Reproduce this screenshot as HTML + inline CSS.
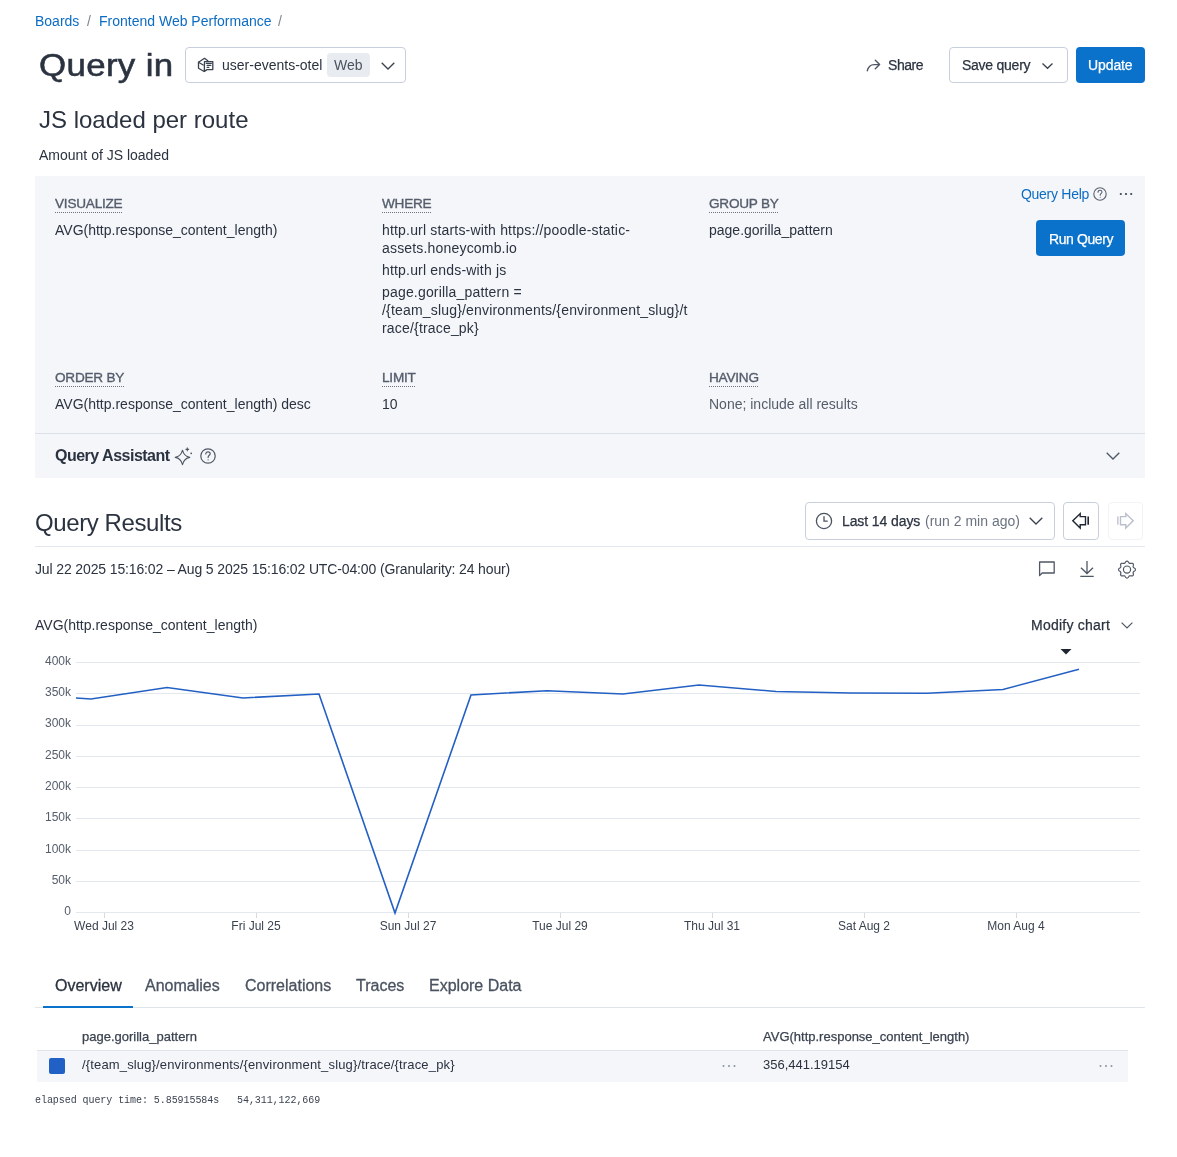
<!DOCTYPE html>
<html><head><meta charset="utf-8">
<style>
*{box-sizing:border-box;margin:0;padding:0}
html,body{width:1177px;height:1157px;overflow:hidden;background:#fff}
body{will-change:transform;font-family:"Liberation Sans",sans-serif;font-size:14px;line-height:16px;color:#2b3340;position:relative}
.a{position:absolute;white-space:nowrap}
svg{position:absolute;overflow:visible}
.blue{color:#0c6cc4}
.lbl{position:absolute;font-size:13.6px;letter-spacing:-0.23px;line-height:16px;color:#555d6b;white-space:nowrap;background-image:linear-gradient(to right,#6b7380 50%,transparent 50%);background-size:2px 1px;background-repeat:repeat-x;background-position:0 16px;padding-bottom:1px;-webkit-text-stroke:0.35px currentColor}
.val{position:absolute;line-height:18px;white-space:nowrap}
.btn{position:absolute;border:1px solid #c8cfdc;border-radius:4px;background:#fff}
.pbtn{position:absolute;border-radius:4px;background:#0b72cb}
.grid{position:absolute;left:76px;width:1064px;height:1px;background:#e3e7ee}
.yl{position:absolute;width:40px;text-align:right;left:31px;font-size:12px;line-height:14px;color:#555d6b}
.xl{position:absolute;font-size:12px;line-height:14px;color:#3b4350;transform:translateX(-50%);white-space:nowrap}
.tick{position:absolute;top:913px;width:1px;height:5px;background:#d5dae3}
.md{-webkit-text-stroke:0.25px currentColor}
.tab{position:absolute;top:976px;font-size:16px;line-height:20px;color:#4a5260;white-space:nowrap;-webkit-text-stroke:0.3px currentColor}
</style></head><body>

<!-- breadcrumb -->
<div class="a blue" style="left:35px;top:13px">Boards</div>
<div class="a" style="left:87px;top:13px;color:#7d8593">/</div>
<div class="a blue" style="left:99px;top:13px">Frontend Web Performance</div>
<div class="a" style="left:278px;top:13px;color:#7d8593">/</div>

<!-- title -->
<div class="a" style="left:39px;top:47px;font-size:32px;line-height:36px;-webkit-text-stroke:0.55px currentColor;letter-spacing:0.3px;transform:scaleX(1.09);transform-origin:0 0">Query in</div>
<div class="btn" style="left:185px;top:47px;width:221px;height:36px"></div>
<svg style="left:192px;top:52px" width="30" height="26" viewBox="0 0 30 26" fill="none" stroke="#3a4250" stroke-width="1.3" stroke-linejoin="round" stroke-linecap="round">
 <path d="M15.8 8.7 L12.5 6.3 L6.5 10.2 V16.3 L12.2 19.5"/>
 <path d="M6.5 10.2 L11.2 13"/>
 <path d="M12.5 9.6 H20.8 V17.6 H15 L12.3 19.4 Z"/>
 <path d="M14.4 11.4 H19.3 M15.2 13.4 H18.8 M15.2 15.4 H16.8"/>
</svg>
<div class="a" style="left:222px;top:57px">user-events-otel</div>
<div class="a" style="left:327px;top:53px;width:43px;height:24px;background:#e8ebf0;border-radius:4px"></div>
<div class="a" style="left:334px;top:57px;color:#4a5260">Web</div>
<svg style="left:381px;top:62px" width="14" height="8" viewBox="0 0 14 8" fill="none" stroke="#3a4250" stroke-width="1.3"><path d="M0.7 0.7 L7 7 L13.3 0.7"/></svg>

<!-- right actions -->
<svg style="left:866px;top:59px" width="15" height="13" viewBox="0 0 15 13" fill="none" stroke="#4f5764" stroke-width="1.4" stroke-linecap="round" stroke-linejoin="round"><path d="M1.3 11.7 C2.2 8 4.5 5.6 8 5.6 H13.6 M9.3 1.3 L13.6 5.6 L9.3 9.7"/></svg>
<div class="a md" style="left:888px;top:57px;letter-spacing:-0.44px">Share</div>
<div class="btn" style="left:949px;top:47px;width:119px;height:36px"></div>
<div class="a md" style="left:962px;top:57px;letter-spacing:-0.25px">Save query</div>
<svg style="left:1042px;top:63px" width="11" height="6" viewBox="0 0 11 6" fill="none" stroke="#3a4250" stroke-width="1.3"><path d="M0.5 0.5 L5.5 5.3 L10.5 0.5"/></svg>
<div class="pbtn" style="left:1076px;top:47px;width:69px;height:36px"></div>
<div class="a md" style="left:1088px;top:57px;letter-spacing:-0.1px;color:#fff">Update</div>

<div class="a" style="left:39px;top:106px;font-size:24px;line-height:28px">JS loaded per route</div>
<div class="a" style="left:39px;top:147px">Amount of JS loaded</div>

<!-- query panel -->
<div class="a" style="left:35px;top:176px;width:1110px;height:302px;background:#f5f6fa"></div>
<div class="a" style="left:35px;top:433px;width:1110px;height:1px;background:#dce0e9"></div>

<div class="lbl" style="left:55px;top:196px">VISUALIZE</div>
<div class="val" style="left:55px;top:221px">AVG(http.response_content_length)</div>
<div class="lbl" style="left:382px;top:196px">WHERE</div>
<div class="val" style="left:382px;top:221px;letter-spacing:0.18px">http.url starts-with https://poodle-static-<br>assets.honeycomb.io</div>
<div class="val" style="left:382px;top:261px;letter-spacing:0.18px">http.url ends-with js</div>
<div class="val" style="left:382px;top:283px;letter-spacing:0.18px">page.gorilla_pattern =<br>/{team_slug}/environments/{environment_slug}/t<br>race/{trace_pk}</div>
<div class="lbl" style="left:709px;top:196px">GROUP BY</div>
<div class="val" style="left:709px;top:221px">page.gorilla_pattern</div>

<div class="a blue" style="left:1021px;top:186px;letter-spacing:-0.28px">Query Help</div>
<svg style="left:1093px;top:187px" width="14" height="14" viewBox="0 0 14 14" fill="none" stroke="#5a6270" stroke-width="1.1"><circle cx="7" cy="7" r="6.2"/><path d="M5 5.3 C5 3.9 6 3.3 7 3.3 C8.1 3.3 9 4 9 5.1 C9 6.4 7.2 6.5 7.2 8.2" stroke-linecap="round"/><circle cx="7.2" cy="10.2" r="0.5" fill="#5a6270" stroke="none"/></svg>
<svg style="left:1119px;top:192px" width="14" height="4" viewBox="0 0 14 4" fill="#3a4250"><circle cx="1.8" cy="2" r="1.1"/><circle cx="7" cy="2" r="1.1"/><circle cx="12.2" cy="2" r="1.1"/></svg>
<div class="pbtn" style="left:1036px;top:220px;width:89px;height:36px"></div>
<div class="a md" style="left:1049px;top:231px;letter-spacing:-0.4px;color:#fff">Run Query</div>

<div class="lbl" style="left:55px;top:370px">ORDER BY</div>
<div class="val" style="left:55px;top:395px">AVG(http.response_content_length) desc</div>
<div class="lbl" style="left:382px;top:370px">LIMIT</div>
<div class="val" style="left:382px;top:395px">10</div>
<div class="lbl" style="left:709px;top:370px">HAVING</div>
<div class="val" style="left:709px;top:395px;color:#555d6b">None; include all results</div>

<div class="a" style="left:55px;top:446px;font-size:16px;line-height:20px;font-weight:700;letter-spacing:-0.5px">Query Assistant</div>
<svg style="left:174px;top:446px" width="20" height="20" viewBox="0 0 20 20" fill="none" stroke="#4f5764" stroke-width="1.1" stroke-linejoin="round"><path d="M1.2 11.4 Q7 10.4 8.5 4.2 Q10 10.4 15.8 11.4 Q10 12.4 8.5 18.6 Q7 12.4 1.2 11.4Z"/><path d="M13.3 1.6 V5.2 M11.5 3.4 H15.1" stroke-width="1.1"/><circle cx="17.2" cy="7.3" r="0.9" fill="#4f5764" stroke="none"/></svg>
<svg style="left:200px;top:448px" width="16" height="16" viewBox="0 0 16 16" fill="none" stroke="#4f5764" stroke-width="1.2"><circle cx="8" cy="8" r="7.2"/><path d="M5.8 6 C5.8 4.5 6.8 3.8 8 3.8 C9.2 3.8 10.2 4.6 10.2 5.8 C10.2 7.3 8.1 7.4 8.1 9.4" stroke-linecap="round"/><circle cx="8.1" cy="11.8" r="0.6" fill="#4f5764" stroke="none"/></svg>
<svg style="left:1106px;top:452px" width="14" height="8" viewBox="0 0 14 8" fill="none" stroke="#4f5764" stroke-width="1.3"><path d="M0.7 0.7 L7 7 L13.3 0.7"/></svg>

<!-- results header -->
<div class="a" style="left:35px;top:509px;font-size:24px;line-height:28px;letter-spacing:-0.4px">Query Results</div>
<div class="btn" style="left:805px;top:502px;width:250px;height:38px"></div>
<svg style="left:815px;top:512px" width="18" height="18" viewBox="0 0 18 18" fill="none" stroke="#4a5260" stroke-width="1.3"><circle cx="9" cy="9" r="7.6"/><path d="M9 4.6 V9.2 H12.2" stroke-linecap="round"/></svg>
<div class="a md" style="left:842px;top:513px;letter-spacing:-0.1px">Last 14 days</div>
<div class="a" style="left:925px;top:513px;color:#6b7380">(run 2 min ago)</div>
<svg style="left:1029px;top:517px" width="14" height="8" viewBox="0 0 14 8" fill="none" stroke="#3a4250" stroke-width="1.3"><path d="M0.7 0.7 L7 7 L13.3 0.7"/></svg>
<div class="btn" style="left:1063px;top:502px;width:36px;height:38px"></div>
<svg style="left:1071px;top:512px" width="20" height="18" viewBox="0 0 20 18" fill="none" stroke="#1f2632" stroke-width="1.4" stroke-linejoin="miter"><path d="M1.8 8.8 L9.2 1.6 V4.6 H14.5 V12.8 H9.2 V16 Z"/><path d="M17.2 4.6 V12.8" stroke-width="1.6"/></svg>
<div class="a" style="left:1108px;top:502px;width:35px;height:38px;border:1px solid #f1f3f6;border-radius:4px"></div>
<svg style="left:1116px;top:512px" width="20" height="18" viewBox="0 0 20 18" fill="none" stroke="#b9c0cc" stroke-width="1.4"><path d="M17.2 8.8 L9.8 1.6 V4.6 H4.5 V12.8 H9.8 V16 Z"/><path d="M1.8 4.6 V12.8" stroke-width="1.6" stroke="#c7cdd7"/></svg>
<div class="a" style="left:35px;top:546px;width:1110px;height:1px;background:#e3e7ee"></div>

<div class="a" style="left:35px;top:561px;letter-spacing:-0.13px">Jul 22 2025 15:16:02 – Aug 5 2025 15:16:02 UTC-04:00 (Granularity: 24 hour)</div>
<svg style="left:1038px;top:561px" width="18" height="16" viewBox="0 0 18 16" fill="none" stroke="#4f5764" stroke-width="1.3" stroke-linejoin="round"><path d="M1.6 1 H16.2 V12 H4.2 L1.6 14.6 Z"/></svg>
<svg style="left:1079px;top:560px" width="16" height="18" viewBox="0 0 16 18" fill="none" stroke="#4f5764" stroke-width="1.3"><path d="M8 1 V13.5 M2 7.7 L8 13.5 L14 7.7 M1.3 16.3 H14.7"/></svg>
<svg style="left:1117px;top:560px" width="20" height="20" viewBox="0 0 20 20" fill="none" stroke="#4f5764" stroke-width="1.2" stroke-linejoin="round"><path d="M10.00 1.15 L10.33 1.20 L10.65 1.34 L10.95 1.56 L11.23 1.83 L11.48 2.15 L11.71 2.47 L11.93 2.77 L12.14 3.03 L12.35 3.23 L12.58 3.36 L12.84 3.43 L13.14 3.44 L13.47 3.40 L13.83 3.34 L14.22 3.28 L14.62 3.24 L15.01 3.24 L15.38 3.30 L15.71 3.43 L15.98 3.62 L16.17 3.89 L16.30 4.22 L16.36 4.59 L16.36 4.98 L16.32 5.38 L16.26 5.77 L16.20 6.13 L16.16 6.46 L16.17 6.76 L16.24 7.02 L16.37 7.25 L16.57 7.46 L16.83 7.67 L17.13 7.89 L17.45 8.12 L17.77 8.37 L18.04 8.65 L18.26 8.95 L18.40 9.27 L18.45 9.60 L18.40 9.93 L18.26 10.25 L18.04 10.55 L17.77 10.83 L17.45 11.08 L17.13 11.31 L16.83 11.53 L16.57 11.74 L16.37 11.95 L16.24 12.18 L16.17 12.44 L16.16 12.74 L16.20 13.07 L16.26 13.43 L16.32 13.82 L16.36 14.22 L16.36 14.61 L16.30 14.98 L16.17 15.31 L15.98 15.58 L15.71 15.77 L15.38 15.90 L15.01 15.96 L14.62 15.96 L14.22 15.92 L13.83 15.86 L13.47 15.80 L13.14 15.76 L12.84 15.77 L12.58 15.84 L12.35 15.97 L12.14 16.17 L11.93 16.43 L11.71 16.73 L11.48 17.05 L11.23 17.37 L10.95 17.64 L10.65 17.86 L10.33 18.00 L10.00 18.05 L9.67 18.00 L9.35 17.86 L9.05 17.64 L8.77 17.37 L8.52 17.05 L8.29 16.73 L8.07 16.43 L7.86 16.17 L7.65 15.97 L7.42 15.84 L7.16 15.77 L6.86 15.76 L6.53 15.80 L6.17 15.86 L5.78 15.92 L5.38 15.96 L4.99 15.96 L4.62 15.90 L4.29 15.77 L4.02 15.58 L3.83 15.31 L3.70 14.98 L3.64 14.61 L3.64 14.22 L3.68 13.82 L3.74 13.43 L3.80 13.07 L3.84 12.74 L3.83 12.44 L3.76 12.18 L3.63 11.95 L3.43 11.74 L3.17 11.53 L2.87 11.31 L2.55 11.08 L2.23 10.83 L1.96 10.55 L1.74 10.25 L1.60 9.93 L1.55 9.60 L1.60 9.27 L1.74 8.95 L1.96 8.65 L2.23 8.37 L2.55 8.12 L2.87 7.89 L3.17 7.67 L3.43 7.46 L3.63 7.25 L3.76 7.02 L3.83 6.76 L3.84 6.46 L3.80 6.13 L3.74 5.77 L3.68 5.38 L3.64 4.98 L3.64 4.59 L3.70 4.22 L3.83 3.89 L4.02 3.62 L4.29 3.43 L4.62 3.30 L4.99 3.24 L5.38 3.24 L5.78 3.28 L6.17 3.34 L6.53 3.40 L6.86 3.44 L7.16 3.43 L7.42 3.36 L7.65 3.23 L7.86 3.03 L8.07 2.77 L8.29 2.47 L8.52 2.15 L8.77 1.83 L9.05 1.56 L9.35 1.34 L9.67 1.20 L10.00 1.15Z"/><circle cx="10" cy="9.6" r="3.6"/></svg>

<!-- chart -->
<div class="a" style="left:35px;top:617px">AVG(http.response_content_length)</div>
<div class="a md" style="left:1031px;top:617px;letter-spacing:0.23px">Modify chart</div>
<svg style="left:1121px;top:622px" width="12" height="7" viewBox="0 0 12 7" fill="none" stroke="#4f5764" stroke-width="1.2"><path d="M0.6 0.6 L6 6 L11.4 0.6"/></svg>
<svg style="left:1060px;top:648px" width="12" height="7" viewBox="0 0 12 7"><path d="M0.5 1 H11.5 L6 6.6 Z" fill="#1f2632"/></svg>
<div class="grid" style="top:912px"></div><div class="grid" style="top:881px"></div><div class="grid" style="top:850px"></div><div class="grid" style="top:818px"></div><div class="grid" style="top:787px"></div><div class="grid" style="top:756px"></div><div class="grid" style="top:725px"></div><div class="grid" style="top:693px"></div><div class="grid" style="top:662px"></div>
<div class="yl" style="top:904px">0</div><div class="yl" style="top:873px">50k</div><div class="yl" style="top:842px">100k</div><div class="yl" style="top:810px">150k</div><div class="yl" style="top:779px">200k</div><div class="yl" style="top:748px">250k</div><div class="yl" style="top:716px">300k</div><div class="yl" style="top:685px">350k</div><div class="yl" style="top:654px">400k</div>
<div class="xl" style="left:104px;top:919px">Wed Jul 23</div><div class="tick" style="left:104px"></div><div class="xl" style="left:256px;top:919px">Fri Jul 25</div><div class="tick" style="left:256px"></div><div class="xl" style="left:408px;top:919px">Sun Jul 27</div><div class="tick" style="left:408px"></div><div class="xl" style="left:560px;top:919px">Tue Jul 29</div><div class="tick" style="left:560px"></div><div class="xl" style="left:712px;top:919px">Thu Jul 31</div><div class="tick" style="left:712px"></div><div class="xl" style="left:864px;top:919px">Sat Aug 2</div><div class="tick" style="left:864px"></div><div class="xl" style="left:1016px;top:919px">Mon Aug 4</div><div class="tick" style="left:1016px"></div>
<svg style="left:0;top:0" width="1177" height="1157" viewBox="0 0 1177 1157"><polyline points="76,698 91,699 167,687.5 243,698 319,694 395,913 471,695 547,690.7 623,694 699,685 776,691.5 851,693 927,693.3 1003,689.5 1079,669.3" fill="none" stroke="#2360c4" stroke-width="1.6" stroke-linejoin="miter"/></svg>

<!-- tabs -->
<div class="tab" style="left:55px;color:#2b3340">Overview</div>
<div class="tab" style="left:145px">Anomalies</div>
<div class="tab" style="left:245px">Correlations</div>
<div class="tab" style="left:356px">Traces</div>
<div class="tab" style="left:429px">Explore Data</div>
<div class="a" style="left:35px;top:1007px;width:1110px;height:1px;background:#e0e4eb"></div>
<div class="a" style="left:43px;top:1006px;width:90px;height:2px;background:#0b72cb"></div>

<!-- table -->
<div class="a md" style="left:82px;top:1029px;font-size:13px;color:#3b4350">page.gorilla_pattern</div>
<div class="a md" style="left:763px;top:1029px;font-size:13px;color:#3b4350">AVG(http.response_content_length)</div>
<div class="a" style="left:37px;top:1050px;width:1091px;height:32px;background:#f5f6fa;border-top:1px solid #e0e4eb"></div>
<div class="a" style="left:49px;top:1058px;width:16px;height:16px;background:#2160c4;border-radius:2px"></div>
<div class="a" style="left:82px;top:1057px;font-size:13px;letter-spacing:0.15px">/{team_slug}/environments/{environment_slug}/trace/{trace_pk}</div>
<svg style="left:722px;top:1064px" width="14" height="4" viewBox="0 0 14 4" fill="#8a92a0"><circle cx="1.5" cy="2" r="1"/><circle cx="7" cy="2" r="1"/><circle cx="12.5" cy="2" r="1"/></svg>
<div class="a" style="left:763px;top:1057px;font-size:13px">356,441.19154</div>
<svg style="left:1099px;top:1064px" width="14" height="4" viewBox="0 0 14 4" fill="#8a92a0"><circle cx="1.5" cy="2" r="1"/><circle cx="7" cy="2" r="1"/><circle cx="12.5" cy="2" r="1"/></svg>

<div class="a" style="left:35px;top:1095px;font-family:'Liberation Mono',monospace;font-size:10px;line-height:12px;color:#3b4350;white-space:pre;letter-spacing:-0.06px">elapsed query time: 5.85915584s   54,311,122,669</div>

</body></html>
